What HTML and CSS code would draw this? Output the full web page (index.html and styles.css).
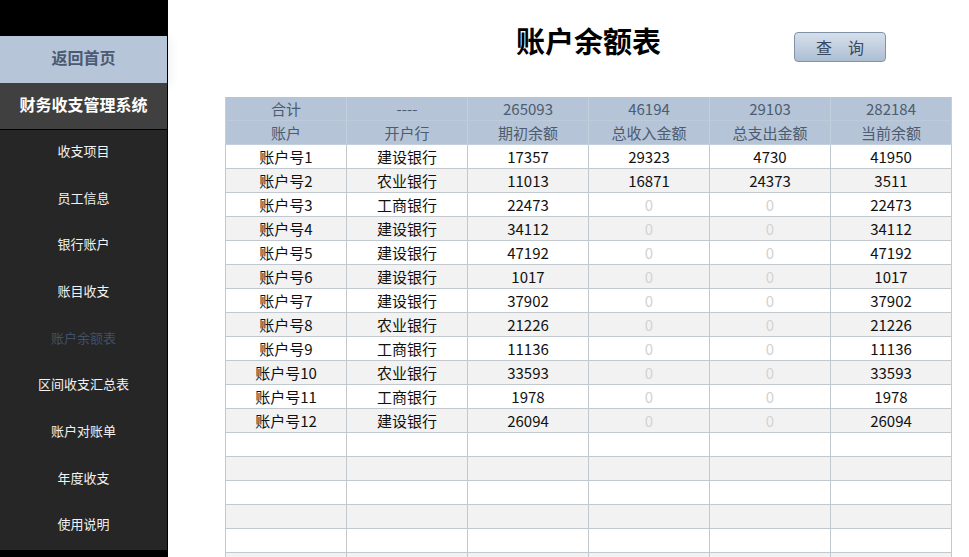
FILE: index.html
```html
<!DOCTYPE html>
<html lang="zh-CN">
<head>
  <meta charset="UTF-8">
  <title>账户余额表</title>
  <link rel="stylesheet" href="styles.css">
</head>
<body>
  <aside class="sidebar">
    <div class="sidebar-top"></div>
    <div class="home-btn">返回首页</div>
    <div class="sys-title">财务收支管理系统</div>
    <nav class="menu">
      <div class="menu-item">收支项目</div>
      <div class="menu-item">员工信息</div>
      <div class="menu-item">银行账户</div>
      <div class="menu-item">账目收支</div>
      <div class="menu-item active">账户余额表</div>
      <div class="menu-item">区间收支汇总表</div>
      <div class="menu-item">账户对账单</div>
      <div class="menu-item">年度收支</div>
      <div class="menu-item">使用说明</div>
    </nav>
  </aside>

  <main class="content">
    <div class="page-head">
      <h1 class="page-title">账户余额表</h1>
      <button class="query-btn">查　询</button>
    </div>

    <table class="balance">
      <thead>
        <tr>
          <th>合计</th><th>----</th><th>265093</th><th>46194</th><th>29103</th><th>282184</th>
        </tr>
        <tr>
          <th>账户</th><th>开户行</th><th>期初余额</th><th>总收入金额</th><th>总支出金额</th><th>当前余额</th>
        </tr>
      </thead>
      <tbody>
        <tr><td>账户号1</td><td>建设银行</td><td>17357</td><td>29323</td><td>4730</td><td>41950</td></tr>
        <tr><td>账户号2</td><td>农业银行</td><td>11013</td><td>16871</td><td>24373</td><td>3511</td></tr>
        <tr><td>账户号3</td><td>工商银行</td><td>22473</td><td class="zero">0</td><td class="zero">0</td><td>22473</td></tr>
        <tr><td>账户号4</td><td>建设银行</td><td>34112</td><td class="zero">0</td><td class="zero">0</td><td>34112</td></tr>
        <tr><td>账户号5</td><td>建设银行</td><td>47192</td><td class="zero">0</td><td class="zero">0</td><td>47192</td></tr>
        <tr><td>账户号6</td><td>建设银行</td><td>1017</td><td class="zero">0</td><td class="zero">0</td><td>1017</td></tr>
        <tr><td>账户号7</td><td>建设银行</td><td>37902</td><td class="zero">0</td><td class="zero">0</td><td>37902</td></tr>
        <tr><td>账户号8</td><td>农业银行</td><td>21226</td><td class="zero">0</td><td class="zero">0</td><td>21226</td></tr>
        <tr><td>账户号9</td><td>工商银行</td><td>11136</td><td class="zero">0</td><td class="zero">0</td><td>11136</td></tr>
        <tr><td>账户号10</td><td>农业银行</td><td>33593</td><td class="zero">0</td><td class="zero">0</td><td>33593</td></tr>
        <tr><td>账户号11</td><td>工商银行</td><td>1978</td><td class="zero">0</td><td class="zero">0</td><td>1978</td></tr>
        <tr><td>账户号12</td><td>建设银行</td><td>26094</td><td class="zero">0</td><td class="zero">0</td><td>26094</td></tr>
        <tr><td></td><td></td><td></td><td></td><td></td><td></td></tr>
        <tr><td></td><td></td><td></td><td></td><td></td><td></td></tr>
        <tr><td></td><td></td><td></td><td></td><td></td><td></td></tr>
        <tr><td></td><td></td><td></td><td></td><td></td><td></td></tr>
        <tr><td></td><td></td><td></td><td></td><td></td><td></td></tr>
        <tr><td></td><td></td><td></td><td></td><td></td><td></td></tr>
      </tbody>
    </table>
  </main>
</body>
</html>
```

FILE: styles.css
```css
html, body {
  margin: 0;
  height: 100%;
  overflow: hidden;
}
body {
  font-family: "Noto Sans CJK SC", "Noto Sans", sans-serif;
  background: #fff;
  display: flex;
  align-items: flex-start;
}
.sidebar {
  width: 167px;
  height: 557px;
  flex-shrink: 0;
  background: #000;
  border-right: 1px solid #000;
  display: flex;
  flex-direction: column;
}
.sidebar-top {
  height: 36px;
}
.home-btn {
  height: 47px;
  box-sizing: border-box;
  padding-bottom: 6px;
  background: #b7c5d8;
  color: #4a5b73;
  font-size: 16px;
  font-weight: bold;
  display: flex;
  align-items: center;
  justify-content: center;
  box-shadow: 4px 2px 10px rgba(0,0,0,0.06);
}
.sys-title {
  height: 47px;
  box-sizing: border-box;
  padding-bottom: 4px;
  background: #404040;
  color: #fff;
  font-size: 16px;
  font-weight: bold;
  display: flex;
  align-items: center;
  justify-content: center;
  border-bottom: 1px solid #000;
}
.menu {
  height: 420px;
  background: #262626;
  display: flex;
  flex-direction: column;
}
.menu-item {
  flex: 1;
  padding-bottom: 6px;
  color: #f2f2f2;
  font-size: 13px;
  display: flex;
  align-items: center;
  justify-content: center;
}
.menu-item.active {
  color: #3f5169;
}
.content {
  padding: 20px 0 0 57px;
}
.page-head {
  width: 727px;
  display: grid;
  grid-template-columns: 1fr auto 1fr;
  align-items: start;
}
.page-title {
  grid-column: 2;
  margin: 0;
  font-size: 29px;
  line-height: 40px;
  font-weight: bold;
  color: #000;
}
.query-btn {
  grid-column: 3;
  justify-self: start;
  margin: 12px 0 0 133px;
  width: 92px;
  height: 30px;
  padding: 0;
  font-family: inherit;
  font-size: 16px;
  color: #3b4a5f;
  background: linear-gradient(#d6e0ec, #adbed3);
  border: 1px solid #8192aa;
  border-radius: 4px;
  cursor: pointer;
}
.balance {
  margin-top: 35px;
  width: 727px;
  table-layout: fixed;
  border-collapse: collapse;
  font-size: 15px;
}
.balance th {
  background: #b5c4d6;
  color: #4d5c71;
  font-weight: normal;
  font-size: 15px;
  height: 21px;
  padding: 1px 0 1px;
  line-height: 20px;
  border: 1px solid #c3cfdc;
  border-top: none;
}
.balance thead tr:first-child th {
  border-bottom-color: #bccadb;
}
.balance td {
  height: 22px;
  padding: 1px 0 0;
  line-height: 20px;
  text-align: center;
  color: #111;
  border: 1px solid #c2c9ce;
}
.balance tbody tr:nth-child(even) td {
  background: #f2f2f2;
}
.balance td.zero {
  color: #d2d2d2;
}
```
